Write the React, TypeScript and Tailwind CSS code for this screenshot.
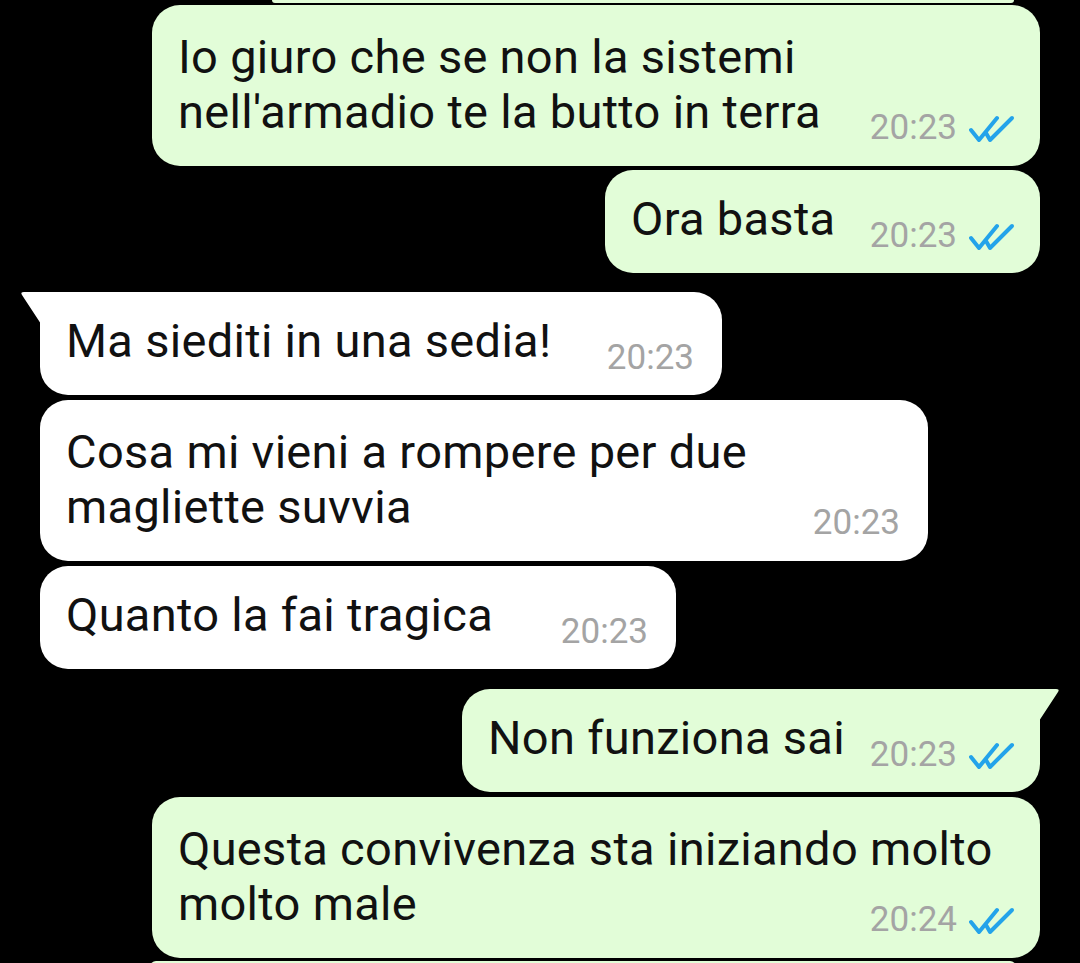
type Msg = {
  out: boolean;
  lines: string[];
  time: string;
  w: number;
  mt: number;
  tail?: boolean;
};

const msgs: Msg[] = [
  { out: true, lines: ["Io giuro che se non la sistemi", "nell'armadio te la butto in terra"], time: "20:23", w: 888, mt: 2 },
  { out: true, lines: ["Ora basta"], time: "20:23", w: 435, mt: 4 },
  { out: false, lines: ["Ma siediti in una sedia!"], time: "20:23", w: 682, mt: 19, tail: true },
  { out: false, lines: ["Cosa mi vieni a rompere per due", "magliette suvvia"], time: "20:23", w: 888, mt: 5 },
  { out: false, lines: ["Quanto la fai tragica"], time: "20:23", w: 636, mt: 5 },
  { out: true, lines: ["Non funziona sai"], time: "20:23", w: 578, mt: 20, tail: true },
  { out: true, lines: ["Questa convivenza sta iniziando molto", "molto male"], time: "20:24", w: 888, mt: 5 },
];

function Ticks() {
  return (
    <svg width="46" height="28" viewBox="0 0 46 28" className="ml-[12px] mb-[4px]">
      <path d="M2 15 L10 25 L28 3" fill="none" stroke="#23a3ea" strokeWidth="4" strokeLinecap="round" strokeLinejoin="round" />
      <path d="M17 18 L21 25 L43 3" fill="none" stroke="#23a3ea" strokeWidth="4" strokeLinecap="round" strokeLinejoin="round" />
    </svg>
  );
}

function Meta({ m }: { m: Msg }) {
  return (
    <div className="flex items-end h-[38px] shrink-0">
      <span className="text-[35px] leading-[38px] text-[#a4a4a4]">{m.time}</span>
      {m.out && <Ticks />}
    </div>
  );
}

function Bubble({ m }: { m: Msg }) {
  const bg = m.out ? "bg-[#e2fdd8]" : "bg-white";
  const fill = m.out ? "#e2fdd8" : "#ffffff";
  const corners = m.tail ? (m.out ? "rounded-tr-none" : "rounded-tl-none") : "";
  const pr = m.out ? "pr-[25px]" : "pr-[28px]";
  const txt = "text-[47px] leading-[55px] tracking-[0.3px] text-[#111111] whitespace-nowrap";
  return (
    <div className={`flex ${m.out ? "justify-end pr-[40px]" : "justify-start pl-[40px]"}`} style={{ marginTop: m.mt }}>
      <div className={`relative rounded-[28px] ${corners} ${bg} pl-[26px] ${pr}`} style={{ width: m.w }}>
        {m.tail && !m.out && (
          <svg width="21" height="32" viewBox="0 0 21 32" className="absolute left-[-20px] top-0">
            <path d="M21 0 L4 0 Q0 0 2 3 L21 32 Z" fill={fill} />
          </svg>
        )}
        {m.tail && m.out && (
          <svg width="21" height="32" viewBox="0 0 21 32" className="absolute right-[-20px] top-0">
            <path d="M0 0 L17 0 Q21 0 19 3 L0 32 Z" fill={fill} />
          </svg>
        )}
        {m.lines.length > 1 ? (
          <div className="flex flex-col pt-[24px] pb-[19px]">
            {m.lines.map((l) => (
              <div key={l} className={txt}>
                {l}
              </div>
            ))}
            <div className="self-end -mt-[30px]">
              <Meta m={m} />
            </div>
          </div>
        ) : (
          <div className="flex items-end justify-between pt-[21px] pb-[27px]">
            <span className={txt}>{m.lines[0]}</span>
            <div className="-mb-[9px]">
              <Meta m={m} />
            </div>
          </div>
        )}
      </div>
    </div>
  );
}

export default function App() {
  return (
    <div className="w-[1080px] h-[963px] bg-black overflow-hidden" style={{ fontFamily: "Roboto, 'Noto Sans', sans-serif" }}>
      <div className="ml-[272px] w-[742px] h-[3px] bg-[#e2fdd8] rounded-b-[3px]" />
      {msgs.map((m, i) => (
        <Bubble key={i} m={m} />
      ))}
      <div className="ml-[150px] mt-[3px] w-[866px] h-[6px] bg-[#e2fdd8] rounded-t-[6px]" />
    </div>
  );
}
